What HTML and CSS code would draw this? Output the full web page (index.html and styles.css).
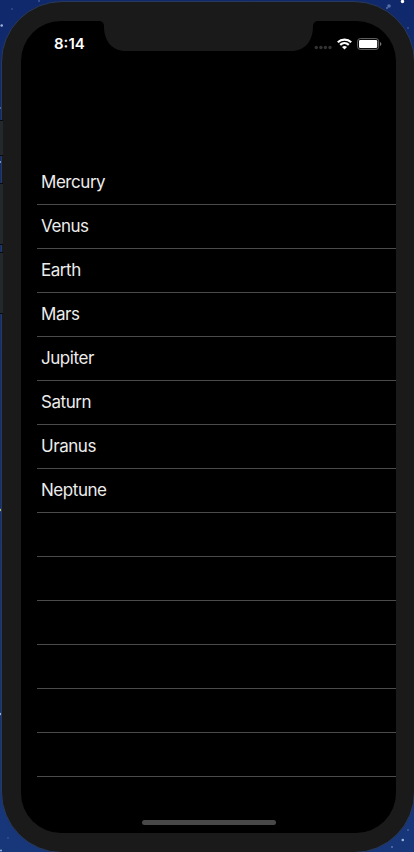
FILE: index.html
```html
<!DOCTYPE html>
<html lang="en">
<head>
<meta charset="utf-8">
<title>Planets</title>
<link rel="stylesheet" href="styles.css">
</head>
<body>
<svg class="stars" width="414" height="852" aria-hidden="true">
  <g fill="#9db5dd">
    <circle cx="1.7" cy="25.5" r="1.3"/><circle cx="402.5" cy="1.5" r="1.7" fill="#fff"/>
    <circle cx="402.8" cy="840" r="1.3"/><circle cx="1" cy="850.5" r="1"/>
    <circle cx="389" cy="6" r="1.8" opacity=".5"/><circle cx="387" cy="8" r="1" opacity=".5"/>
    <circle cx="408" cy="28" r=".7" opacity=".6"/><circle cx="12" cy="9" r=".7" opacity=".5"/>
    <circle cx="39" cy="1" r=".8" opacity=".6"/><circle cx="392" cy="847" r="1" opacity=".5"/>
    <circle cx="408" cy="830" r=".7" opacity=".7"/><circle cx="8" cy="838" r=".7" opacity=".4"/>
    <circle cx="1" cy="108" r=".8"/><circle cx="1" cy="162" r="1"/>
    <circle cx="0" cy="510" r="1.2" fill="#bfb878"/><circle cx="0" cy="714" r="1.2"/>
  </g>
</svg>
<div class="device">
  <i class="key key-mute"></i><i class="key key-up"></i><i class="key key-down"></i>
  <main class="screen">
    <svg class="notch" width="217" height="31" viewBox="0 0 217 31" aria-hidden="true">
      <path fill="#1a1a1a" d="M0 0H217Q213 1 213 5C213 20 205 30 191 30H26C12 30 4 20 4 5Q4 1 0 0Z"/>
    </svg>
    <header class="status">
      <span class="time">8:14</span>
      <div class="indicators">
        <svg class="signal" width="18" height="5" viewBox="0 0 18 5"><g fill="#333"><circle cx="2.3" cy="2.5" r="1.7"/><circle cx="6.9" cy="2.5" r="1.7"/><circle cx="11.4" cy="2.5" r="1.7"/><circle cx="16" cy="2.5" r="1.7"/></g></svg>
        <svg class="wifi" width="15" height="12" viewBox="0 0 15 12"><g fill="none" stroke="#fff" stroke-width="2.2"><path d="M.8 4.200C4.500.700 10.500.700 14.200 4.200"/><path d="M3.200 6.900C5.700 4.600 9.300 4.600 11.800 6.900"/></g><path fill="#fff" d="M7.500 11.500 5 9Q7.500 7 10 9Z"/></svg>
        <svg class="battery" width="25" height="12" viewBox="0 0 25 12"><rect x=".6" y=".6" width="21" height="10.800" rx="2.700" fill="none" stroke="#686868"/><rect x="2" y="2" width="18.200" height="8" rx="1.300" fill="#fff"/><path fill="#777" d="M23 4q1.400 .6 1.400 2T23 8Z"/></svg>
      </div>
    </header>
    <ul class="list">
      <li>Mercury</li>
      <li>Venus</li>
      <li>Earth</li>
      <li>Mars</li>
      <li>Jupiter</li>
      <li>Saturn</li>
      <li>Uranus</li>
      <li>Neptune</li>
      <li></li>
      <li></li>
      <li></li>
      <li></li>
      <li></li>
      <li></li>
    </ul>
    <div class="home"></div>
  </main>
</div>
</body>
</html>
```
FILE: styles.css
```css
* { box-sizing: border-box; }
html { height: 852px; overflow: hidden; background: #143070; }
body {
  display: flow-root;
  margin: 0;
  width: 414px;
  height: 852px;
  overflow: hidden;
  background: linear-gradient(#10296c, #17377a);
  font-family: Inter, "Liberation Sans", sans-serif;
  color: #fff;
}
.stars { position: absolute; top: 0; left: 0; }
.device {
  position: relative;
  width: 414px;
  height: 852px;
  margin: 1px 0 0 1px;
  padding: 19px 0 0 19px;
  background: #1a1a1a;
  border: 1px solid #283a5c;
  border-radius: 61px;
}
.key {
  position: absolute;
  left: -3px;
  width: 4px;
  background: #23282b;
  border: solid #070a10;
  border-width: 1px 0;
}
.key-mute { top: 118px; height: 36px; }
.key-up { top: 181px; height: 62px; }
.key-down { top: 250px; height: 62px; }
.screen {
  position: relative;
  display: flex;
  flex-direction: column;
  width: 375px;
  height: 812px;
  background: #000;
  border-radius: 40px;
  overflow: hidden;
}
.notch { position: absolute; top: 0; left: 79px; }
.status {
  flex: none;
  display: flex;
  justify-content: space-between;
  height: 44px;
  padding: 14px 14px 0 33px;
}
.time {
  font-size: 15px;
  font-weight: 600;
  line-height: 18px;
}
.indicators { display: flex; align-items: flex-start; padding-top: 3px; }
.signal { margin: 7px 5px 0 0; }
.wifi { margin-right: 5px; }
.list {
  flex: none;
  margin: 96px 0 0 16px;
  padding: 0;
  list-style: none;
}
.list li {
  height: 44px;
  padding-left: 4px;
  border-bottom: 1px solid #4b4b4b;
  font-size: 17px;
  line-height: 42px;
  letter-spacing: -0.45px;
  color: #ececec;
}
.home {
  width: 134px;
  height: 5px;
  margin: auto auto 8px;
  border-radius: 3px;
  background: #484848;
}
```
